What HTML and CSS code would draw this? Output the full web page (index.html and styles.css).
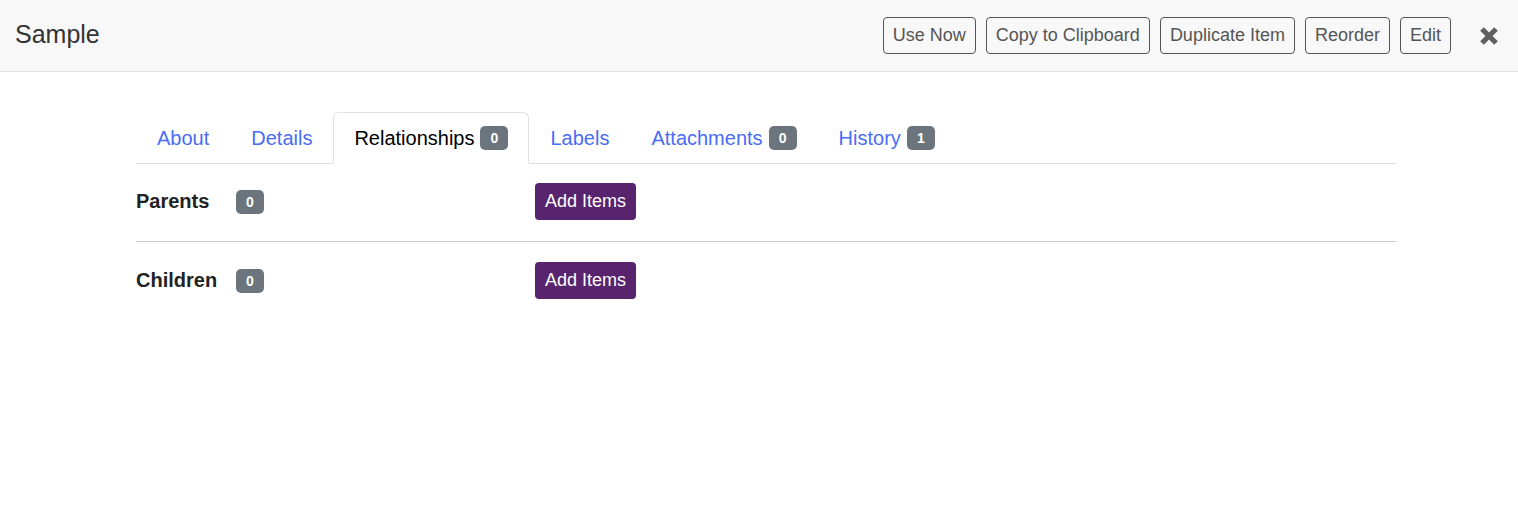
FILE: index.html
```html
<!DOCTYPE html>
<html lang="en">
<head>
<meta charset="utf-8">
<title>Sample</title>
<link rel="stylesheet" href="styles.css">
</head>
<body>
<header class="topbar">
  <h1 class="title">Sample</h1>
  <div class="actions">
    <button class="btn-outline">Use Now</button>
    <button class="btn-outline">Copy to Clipboard</button>
    <button class="btn-outline">Duplicate Item</button>
    <button class="btn-outline">Reorder</button>
    <button class="btn-outline">Edit</button>
    <button class="close" aria-label="Close">
      <svg width="22" height="20" viewBox="0 0 22 20"><path d="M4 3 L18 17 M18 3 L4 17" stroke="#606060" stroke-width="5.2" stroke-linecap="butt"/></svg>
    </button>
  </div>
</header>
<main class="content">
  <nav class="tabs">
    <a class="tab">About</a>
    <a class="tab">Details</a>
    <a class="tab active">Relationships <span class="badge">0</span></a>
    <a class="tab">Labels</a>
    <a class="tab">Attachments <span class="badge">0</span></a>
    <a class="tab">History <span class="badge">1</span></a>
  </nav>
  <section class="rel-row">
    <div class="rel-label"><span class="rel-name">Parents</span><span class="badge">0</span></div>
    <div><button class="btn-primary">Add Items</button></div>
  </section>
  <section class="rel-row">
    <div class="rel-label"><span class="rel-name">Children</span><span class="badge">0</span></div>
    <div><button class="btn-primary">Add Items</button></div>
  </section>
</main>
</body>
</html>
```
FILE: styles.css
```css
* { box-sizing: border-box; }
html, body { margin: 0; padding: 0; background: #fff; }
body { font-family: "Liberation Sans", Arial, sans-serif; color: #222; }

.topbar {
  height: 72px;
  background: #f8f8f8;
  border-bottom: 1px solid #e3e3e3;
  display: flex;
  align-items: center;
  justify-content: space-between;
  padding: 0 18px 0 15px;
}
.title {
  margin: 0;
  font-size: 25px;
  font-weight: normal;
  color: #333;
  line-height: 1;
  padding-bottom: 3px;
}
.actions {
  display: flex;
  align-items: center;
  gap: 10px;
}
.btn-outline {
  font-family: inherit;
  font-size: 18px;
  line-height: 23px;
  padding: 6px 9px;
  color: #555;
  background: transparent;
  border: 1px solid #555;
  border-radius: 4px;
}
.close {
  margin-left: 17px;
  border: 0;
  background: transparent;
  padding: 0;
  display: flex;
  width: 22px;
  height: 20px;
}

.content {
  width: 1260px;
  margin-left: 136px;
  padding-top: 40px;
}
.tabs {
  display: flex;
  border-bottom: 1px solid #dee2e6;
}
.tab {
  font-size: 20px;
  line-height: 26px;
  padding: 12px 20px;
  color: #4a6cf5;
  border: 1px solid transparent;
  border-radius: 6px 6px 0 0;
  margin-bottom: -1px;
  display: flex;
  align-items: center;
  gap: 6px;
}
.tab.active {
  color: #000;
  background: #fff;
  border-color: #dee2e6 #dee2e6 #fff;
}
.badge {
  display: inline-flex;
  align-items: center;
  justify-content: center;
  min-width: 28px;
  height: 24px;
  padding: 0 10px;
  border-radius: 5px;
  background: #6c757d;
  color: #fff;
  font-size: 14px;
  font-weight: bold;
  line-height: 1;
}

.rel-row {
  display: grid;
  grid-template-columns: 399px 1fr;
  align-items: center;
  padding: 19px 0 21px;
  border-bottom: 1px solid #ccc;
}
.rel-row:last-child { border-bottom: 0; padding-top: 20px; }
.rel-label { display: flex; align-items: center; }
.rel-name {
  width: 100px;
  font-size: 20px;
  font-weight: bold;
  color: #222;
}
.btn-primary {
  font-family: inherit;
  font-size: 18px;
  line-height: 23px;
  padding: 7px 10px;
  color: #fff;
  background: #58246e;
  border: 0;
  border-radius: 4px;
}
```
